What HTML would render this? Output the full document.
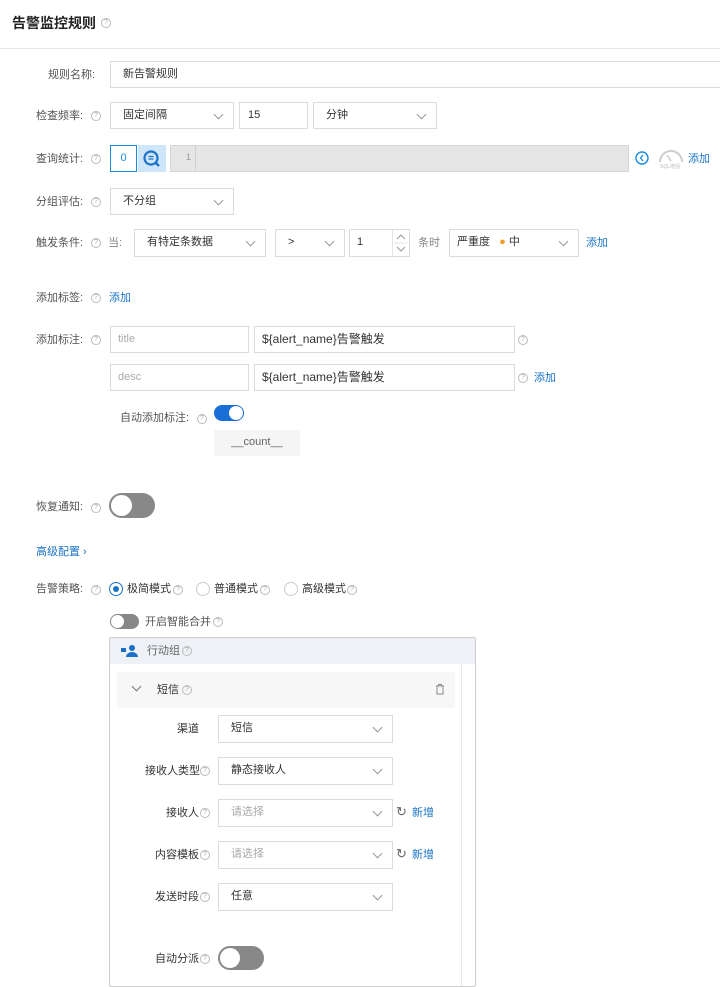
<!DOCTYPE html>
<html><head><meta charset="utf-8">
<style>
*{box-sizing:border-box;margin:0;padding:0}
body{width:720px;height:982px;overflow:hidden;background:#fff;font-family:"Liberation Sans","Noto Sans CJK SC",sans-serif;font-size:11px;color:#333;position:relative}
.a{position:absolute}
.lbl{position:absolute;color:#555;font-size:11px;line-height:14px;white-space:nowrap}
.q{position:absolute;width:10px;height:10px;border:1px solid #bbb;border-radius:50%;font-size:7px;line-height:8px;text-align:center;color:#aaa;font-family:"Liberation Sans",sans-serif}
.q::after{content:"?"}
.box{position:absolute;border:1px solid #dcdcdc;background:#fff;font-size:11px;line-height:25px;padding-left:12px;color:#333;white-space:nowrap}
.sel::after{content:"";position:absolute;right:11px;top:8px;width:6px;height:6px;border-right:1px solid #999;border-bottom:1px solid #999;transform:rotate(45deg)}
.link{position:absolute;color:#1a73c8;font-size:11px;line-height:14px}
.ph{color:#aaa}
</style></head><body>
<div class="a" style="left:12px;top:14px;font-size:14px;font-weight:bold;color:#222;line-height:18px">告警监控规则</div>
<div class="q" style="left:101px;top:18px"></div>
<div class="a" style="left:0;top:48px;width:720px;height:1px;background:#e6e6e6"></div>

<div class="lbl" style="left:48px;top:68px">规则名称:</div>
<div class="box" style="left:110px;top:61px;width:612px;height:27px">新告警规则</div>

<div class="lbl" style="left:36px;top:109px">检查频率:</div><div class="q" style="left:91px;top:111px"></div>
<div class="box sel" style="left:110px;top:102px;width:124px;height:27px">固定间隔</div>
<div class="box" style="left:239px;top:102px;width:69px;height:27px;padding-left:8px">15</div>
<div class="box sel" style="left:313px;top:102px;width:124px;height:27px">分钟</div>

<div class="lbl" style="left:36px;top:152px">查询统计:</div><div class="q" style="left:91px;top:154px"></div>
<div class="box" style="left:110px;top:145px;width:27px;height:27px;border-color:#1a8ae0;color:#1a8ae0;padding:0;text-align:center">0</div>
<div class="a" style="left:138px;top:145px;width:28px;height:27px;background:#cfe6fa"></div>
<svg class="a" style="left:142px;top:149px" width="20" height="20" viewBox="0 0 20 20"><circle cx="9" cy="9" r="6.5" fill="none" stroke="#1a73c8" stroke-width="2.2"/><path d="M14 14l3 3" stroke="#1a73c8" stroke-width="2.4"/><path d="M6.5 7.5h5M6.5 10h5" stroke="#1a73c8" stroke-width="1.2"/></svg>
<div class="a" style="left:170px;top:145px;width:459px;height:27px;background:#e6e6e6;border:1px solid #d6d6d6"></div>
<div class="a" style="left:195px;top:146px;width:1px;height:25px;background:#d0d0d0"></div>
<div class="a" style="left:186px;top:152px;font-size:9px;color:#999">1</div>
<svg class="a" style="left:634px;top:150px" width="16" height="16"><circle cx="8" cy="8" r="6" fill="none" stroke="#1a8ae0" stroke-width="1.4"/><path d="M9 5L6.5 8 9 11" fill="none" stroke="#1a8ae0" stroke-width="1.3"/></svg>
<svg class="a" style="left:657px;top:147px" width="28" height="22"><path d="M3 15a11 11 0 0 1 22 0" fill="none" stroke="#ccc" stroke-width="2"/><path d="M14 14l-4-6" stroke="#ccc" stroke-width="1.5"/><text x="3" y="21" font-size="5" fill="#bbb" font-family="Liberation Sans">SQL增强</text></svg>
<div class="link" style="left:688px;top:152px">添加</div>

<div class="lbl" style="left:36px;top:195px">分组评估:</div><div class="q" style="left:91px;top:197px"></div>
<div class="box sel" style="left:110px;top:188px;width:124px;height:27px">不分组</div>

<div class="lbl" style="left:36px;top:236px">触发条件:</div><div class="q" style="left:91px;top:238px"></div>
<div class="lbl" style="left:108px;top:236px;color:#888">当:</div>
<div class="box sel" style="left:134px;top:229px;width:132px;height:28px">有特定条数据</div>
<div class="box sel" style="left:275px;top:229px;width:70px;height:28px">&gt;</div>
<div class="box" style="left:349px;top:229px;width:61px;height:28px;padding-left:7px">1</div>
<div class="a" style="left:392px;top:230px;width:17px;height:26px;border-left:1px solid #e6e6e6"></div>
<svg class="a" style="left:394px;top:231px" width="14" height="24"><path d="M3 8l4-4 4 4M3 16l4 4 4-4" fill="none" stroke="#999"/><path d="M0 12h14" stroke="#e6e6e6"/></svg>
<div class="lbl" style="left:418px;top:236px;color:#888">条时</div>
<div class="box sel" style="left:449px;top:229px;width:130px;height:28px;padding-left:7px">严重度 &nbsp;&nbsp;<span style="color:#f0a030">●</span> 中</div>
<div class="link" style="left:586px;top:236px">添加</div>

<div class="lbl" style="left:36px;top:291px">添加标签:</div><div class="q" style="left:91px;top:293px"></div>
<div class="link" style="left:109px;top:291px">添加</div>

<div class="lbl" style="left:36px;top:333px">添加标注:</div><div class="q" style="left:91px;top:335px"></div>
<div class="box ph" style="left:110px;top:326px;width:139px;height:27px;padding-left:7px">title</div>
<div class="box" style="left:254px;top:326px;width:261px;height:27px;padding-left:7px;font-size:12px">${alert_name}告警触发</div>
<div class="q" style="left:518px;top:335px"></div>
<div class="box ph" style="left:110px;top:364px;width:139px;height:27px;padding-left:7px">desc</div>
<div class="box" style="left:254px;top:364px;width:261px;height:27px;padding-left:7px;font-size:12px">${alert_name}告警触发</div>
<div class="q" style="left:518px;top:373px"></div>
<div class="link" style="left:534px;top:371px">添加</div>

<div class="lbl" style="left:120px;top:411px">自动添加标注:</div><div class="q" style="left:197px;top:414px"></div>
<div class="a" style="left:214px;top:405px;width:30px;height:16px;border-radius:8px;background:#1a6fd6"></div>
<div class="a" style="left:229px;top:406px;width:14px;height:14px;border-radius:50%;background:#fff"></div>
<div class="a" style="left:214px;top:430px;width:86px;height:26px;background:#f5f5f5;color:#666;text-align:center;line-height:24px;font-size:11px">__count__</div>

<div class="lbl" style="left:36px;top:500px">恢复通知:</div><div class="q" style="left:91px;top:503px"></div>
<div class="a" style="left:109px;top:493px;width:46px;height:25px;border-radius:13px;background:#888"></div>
<div class="a" style="left:111px;top:495px;width:21px;height:21px;border-radius:50%;background:#fff"></div>

<div class="link" style="left:36px;top:545px">高级配置 ›</div>

<div class="lbl" style="left:36px;top:582px">告警策略:</div><div class="q" style="left:91px;top:585px"></div>
<div class="a" style="left:109px;top:582px;width:14px;height:14px;border:1px solid #1a73c8;border-radius:50%"></div>
<div class="a" style="left:113px;top:586px;width:6px;height:6px;background:#1a73c8;border-radius:50%"></div>
<div class="lbl" style="left:127px;top:582px;color:#333">极简模式</div><div class="q" style="left:173px;top:585px"></div>
<div class="a" style="left:196px;top:582px;width:14px;height:14px;border:1px solid #ccc;border-radius:50%"></div>
<div class="lbl" style="left:214px;top:582px;color:#333">普通模式</div><div class="q" style="left:260px;top:585px"></div>
<div class="a" style="left:284px;top:582px;width:14px;height:14px;border:1px solid #ccc;border-radius:50%"></div>
<div class="lbl" style="left:302px;top:582px;color:#333">高级模式</div><div class="q" style="left:347px;top:585px"></div>

<div class="a" style="left:110px;top:614px;width:29px;height:15px;border-radius:8px;background:#888"></div>
<div class="a" style="left:111px;top:615px;width:13px;height:13px;border-radius:50%;background:#fff"></div>
<div class="lbl" style="left:145px;top:615px">开启智能合并</div><div class="q" style="left:213px;top:617px"></div>

<div class="a" style="left:109px;top:637px;width:367px;height:350px;border:1px solid #ccc;border-radius:2px"></div>
<div class="a" style="left:110px;top:638px;width:365px;height:26px;background:#eef2f6"></div>
<svg class="a" style="left:120px;top:644px" width="20" height="14"><rect x="1" y="4" width="5" height="4" fill="#1a6fc8"/><circle cx="12" cy="4" r="3" fill="#1a6fc8"/><path d="M6 13a6 5 0 0 1 12 0z" fill="#1a6fc8"/></svg>
<div class="lbl" style="left:147px;top:644px;color:#666">行动组</div><div class="q" style="left:182px;top:646px"></div>
<div class="a" style="left:461px;top:664px;width:1px;height:322px;background:#e8e8e8"></div>
<div class="a" style="left:117px;top:672px;width:338px;height:36px;background:#f7f7f7"></div>
<div class="a" style="left:133px;top:683px;width:7px;height:7px;border-right:1px solid #777;border-bottom:1px solid #777;transform:rotate(45deg)"></div>
<div class="lbl" style="left:157px;top:683px;color:#333">短信</div><div class="q" style="left:182px;top:685px"></div>
<svg class="a" style="left:435px;top:683px" width="10" height="12"><path d="M1 3h8M3.5 3V1.5h3V3M2 3v8h6V3" fill="none" stroke="#888"/></svg>

<div class="lbl" style="left:177px;top:722px;color:#333">渠道</div>
<div class="box sel" style="left:218px;top:715px;width:175px;height:28px">短信</div>
<div class="lbl" style="left:145px;top:764px;color:#333">接收人类型</div><div class="q" style="left:200px;top:766px"></div>
<div class="box sel" style="left:218px;top:757px;width:175px;height:28px">静态接收人</div>
<div class="lbl" style="left:166px;top:806px;color:#333">接收人</div><div class="q" style="left:200px;top:808px"></div>
<div class="box sel ph" style="left:218px;top:799px;width:175px;height:28px">请选择</div>
<div class="lbl" style="left:396px;top:805px;color:#666;font-size:13px">↻</div><div class="link" style="left:412px;top:806px">新增</div>
<div class="lbl" style="left:155px;top:848px;color:#333">内容模板</div><div class="q" style="left:200px;top:850px"></div>
<div class="box sel ph" style="left:218px;top:841px;width:175px;height:28px">请选择</div>
<div class="lbl" style="left:396px;top:847px;color:#666;font-size:13px">↻</div><div class="link" style="left:412px;top:848px">新增</div>
<div class="lbl" style="left:155px;top:890px;color:#333">发送时段</div><div class="q" style="left:200px;top:892px"></div>
<div class="box sel" style="left:218px;top:883px;width:175px;height:28px">任意</div>

<div class="lbl" style="left:155px;top:952px;color:#333">自动分派</div><div class="q" style="left:200px;top:954px"></div>
<div class="a" style="left:218px;top:946px;width:46px;height:24px;border-radius:12px;background:#888"></div>
<div class="a" style="left:220px;top:948px;width:20px;height:20px;border-radius:50%;background:#fff"></div>
</body></html>
